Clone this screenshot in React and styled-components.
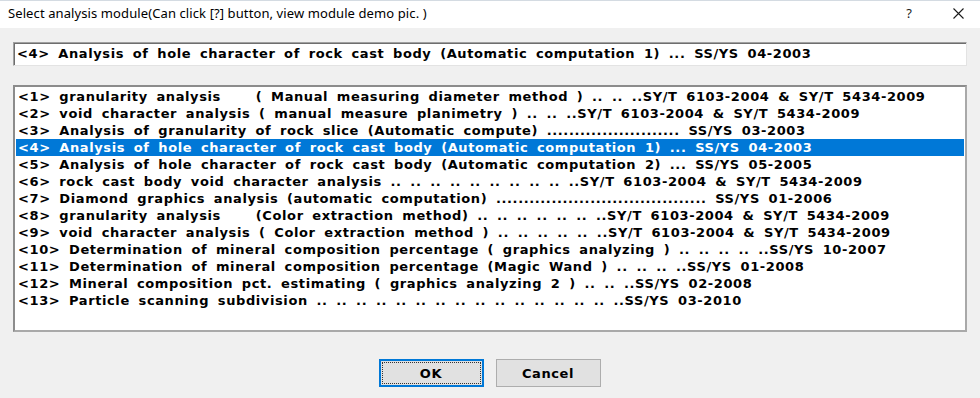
import React from 'react';
import styled, { createGlobalStyle } from 'styled-components';

const GlobalStyle = createGlobalStyle`
  html, body {
    margin: 0;
    padding: 0;
    background: #f0f0f0;
  }
`;

const MODULES = [
  '<1> granularity analysis    ( Manual measuring diameter method ) .. .. ..SY/T 6103-2004 & SY/T 5434-2009',
  '<2> void character analysis ( manual measure planimetry ) .. .. ..SY/T 6103-2004 & SY/T 5434-2009',
  '<3> Analysis of granularity of rock slice (Automatic compute) ........................ SS/YS 03-2003',
  '<4> Analysis of hole character of rock cast body (Automatic computation 1) ... SS/YS 04-2003',
  '<5> Analysis of hole character of rock cast body (Automatic computation 2) ... SS/YS 05-2005',
  '<6> rock cast body void character analysis .. .. .. .. .. .. .. .. .. ..SY/T 6103-2004 & SY/T 5434-2009',
  '<7> Diamond graphics analysis (automatic computation) ...................................... SS/YS 01-2006',
  '<8> granularity analysis    (Color extraction method) .. .. .. .. .. .. ..SY/T 6103-2004 & SY/T 5434-2009',
  '<9> void character analysis ( Color extraction method ) .. .. .. .. .. ..SY/T 6103-2004 & SY/T 5434-2009',
  '<10> Determination of mineral composition percentage ( graphics analyzing ) .. .. .. .. ..SS/YS 10-2007',
  '<11> Determination of mineral composition percentage (Magic Wand ) .. .. .. ..SS/YS 01-2008',
  '<12> Mineral composition pct. estimating ( graphics analyzing 2 ) .. .. ..SS/YS 02-2008',
  '<13> Particle scanning subdivision .. .. .. .. .. .. .. .. .. .. .. .. .. .. .. ..SS/YS 03-2010',
];

const SELECTED = 3;

export default function App() {
  return (
    <>
      <GlobalStyle />
      <Dialog>
        <TitleBar>
          <Title>Select analysis module(Can click [?] button, view module demo pic. )</Title>
          <HelpButton>?</HelpButton>
          <CloseButton>
            <svg width="11" height="11" viewBox="0 0 11 11">
              <path d="M0.5 0.5 L10.5 10.5 M10.5 0.5 L0.5 10.5" stroke="#1a1a1a" strokeWidth="1.1" fill="none" />
            </svg>
          </CloseButton>
        </TitleBar>
        <Body>
          <SelectedField>{MODULES[SELECTED]}</SelectedField>
          <ListBox>
            {MODULES.map((m, i) => (
              <Row key={i} $selected={i === SELECTED}>{m}</Row>
            ))}
          </ListBox>
          <ButtonRow>
            <Button $default>OK</Button>
            <Button>Cancel</Button>
          </ButtonRow>
        </Body>
      </Dialog>
    </>
  );
}

const Dialog = styled.div`
  width: 980px;
  height: 398px;
  display: flex;
  flex-direction: column;
  background: #f0f0f0;
  overflow: hidden;
`;

const TitleBar = styled.div`
  height: 27px;
  flex-shrink: 0;
  display: flex;
  align-items: center;
  background: #ffffff;
  border-top: 1px solid #d4dbe2;
  padding-left: 8px;
`;

const Title = styled.div`
  flex: 1;
  font-family: 'Noto Sans', 'Open Sans', sans-serif;
  font-size: 13px;
  letter-spacing: 0.1px;
  color: #000;
  white-space: nowrap;
  margin-top: -3px;
`;

const HelpButton = styled.div`
  width: 46px;
  text-align: center;
  margin-right: 11px;
  margin-top: -3px;
  font-family: 'Noto Sans', sans-serif;
  font-size: 13px;
  color: #1a1a1a;
`;

const CloseButton = styled.div`
  width: 30px;
  height: 27px;
  display: flex;
  align-items: center;
  justify-content: center;
  margin-right: 7px;
  margin-top: -2px;
`;

const listText = `
  font-family: 'DejaVu Sans', 'Liberation Sans', sans-serif;
  font-weight: bold;
  font-size: 13px;
  letter-spacing: 0.6px;
  word-spacing: 3.6px;
  white-space: pre;
`;

const Body = styled.div`
  flex: 1;
  display: flex;
  flex-direction: column;
  padding: 14px 13px 0 13px;
`;

const SelectedField = styled.div`
  ${listText}
  height: 22px;
  line-height: 22px;
  padding-left: 3px;
  background: #ffffff;
  color: #000;
  border-top: 1px solid #a0a0a0;
  border-left: 1px solid #a0a0a0;
  border-right: 1px solid #e3e3e3;
  border-bottom: 1px solid #e3e3e3;
  box-shadow: inset 1px 1px 0 #6e6e6e;
  overflow: hidden;
`;

const ListBox = styled.div`
  margin-top: 19px;
  height: 241px;
  padding: 1px;
  background: #ffffff;
  border-top: 2px solid #8c8c8c;
  border-left: 2px solid #8c8c8c;
  border-right: 2px solid #a9a9a9;
  border-bottom: 2px solid #a9a9a9;
  overflow: hidden;
`;

const Row = styled.div`
  ${listText}
  height: 17px;
  line-height: 17px;
  padding-left: 2px;
  color: ${(p) => (p.$selected ? '#ffffff' : '#000000')};
  background: ${(p) => (p.$selected ? '#0078d7' : 'transparent')};
`;

const ButtonRow = styled.div`
  margin-top: 27px;
  display: flex;
  justify-content: center;
  gap: 12px;
  padding-right: 1px;
`;

const Button = styled.div`
  position: relative;
  box-sizing: border-box;
  width: 105px;
  height: 28px;
  display: flex;
  align-items: center;
  justify-content: center;
  background: #e1e1e1;
  border: ${(p) => (p.$default ? '2px solid #0078d7' : '1px solid #adadad')};
  font-family: 'DejaVu Sans', 'Liberation Sans', sans-serif;
  font-weight: bold;
  font-size: 13px;
  letter-spacing: 0.6px;
  color: #000;

  &::after {
    content: '';
    display: ${(p) => (p.$default ? 'block' : 'none')};
    position: absolute;
    inset: 1px;
    border: 1px dotted #333;
  }
`;
